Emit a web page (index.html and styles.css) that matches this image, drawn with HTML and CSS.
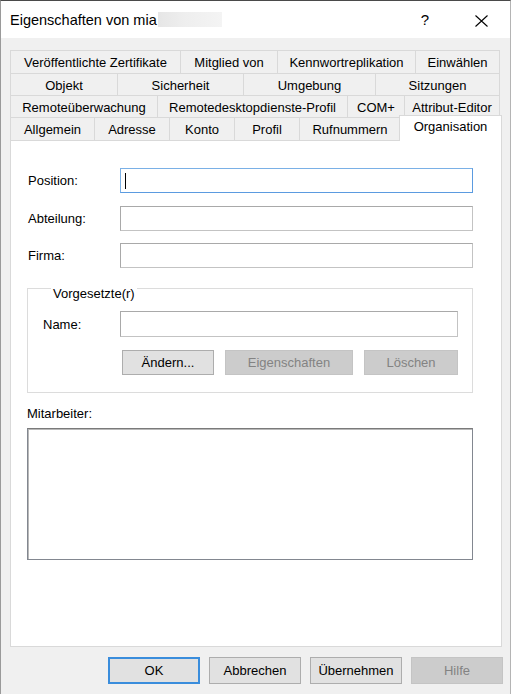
FILE: index.html
```html
<!DOCTYPE html>
<html lang="de">
<head>
<meta charset="utf-8">
<title>Eigenschaften von mia</title>
<link rel="stylesheet" href="styles.css">
</head>
<body>
<div class="window">
  <div class="titlebar">
    <span class="title">Eigenschaften von mia<span class="redact"></span></span>
    <span class="help">?</span>
    <span class="close"><svg width="13" height="12" viewBox="0 0 13 12"><path d="M0.5 0.5 L12.5 11.5 M12.5 0.5 L0.5 11.5" stroke="#000" stroke-width="1.1" fill="none"/></svg></span>
  </div>
  <div class="dialog">
    <div class="tabs">
      <div class="tabrow r1">
        <div class="tab">Veröffentlichte Zertifikate</div>
        <div class="tab">Mitglied von</div>
        <div class="tab">Kennwortreplikation</div>
        <div class="tab">Einwählen</div>
      </div>
      <div class="tabrow r2">
        <div class="tab">Objekt</div>
        <div class="tab">Sicherheit</div>
        <div class="tab">Umgebung</div>
        <div class="tab">Sitzungen</div>
      </div>
      <div class="tabrow r3">
        <div class="tab">Remoteüberwachung</div>
        <div class="tab">Remotedesktopdienste-Profil</div>
        <div class="tab">COM+</div>
        <div class="tab">Attribut-Editor</div>
      </div>
      <div class="tabrow r4">
        <div class="tab">Allgemein</div>
        <div class="tab">Adresse</div>
        <div class="tab">Konto</div>
        <div class="tab">Profil</div>
        <div class="tab">Rufnummern</div>
        <div class="tab active">Organisation</div>
      </div>
    </div>
    <div class="panel">
      <div class="form">
        <label class="lbl">Position:</label>
        <div class="field focus"><span class="caret"></span></div>
        <label class="lbl">Abteilung:</label>
        <div class="field"></div>
        <label class="lbl">Firma:</label>
        <div class="field"></div>
      </div>
      <div class="group">
        <div class="group-title">Vorgesetzte(r)</div>
        <div class="group-body">
          <label class="lbl">Name:</label>
          <div class="field name"></div>
          <div class="group-buttons">
            <button class="btn w92">Ändern...</button>
            <button class="btn w128" disabled>Eigenschaften</button>
            <button class="btn w94" disabled>Löschen</button>
          </div>
        </div>
      </div>
      <div class="list-label">Mitarbeiter:</div>
      <div class="listbox"></div>
    </div>
    <div class="footer">
      <button class="btn fbtn default">OK</button>
      <button class="btn fbtn">Abbrechen</button>
      <button class="btn fbtn">Übernehmen</button>
      <button class="btn fbtn" disabled>Hilfe</button>
    </div>
  </div>
</div>
</body>
</html>
```

FILE: styles.css
```css
* { box-sizing: border-box; }
html, body { margin: 0; padding: 0; }
body {
  font-family: "Liberation Sans", Arial, sans-serif;
  font-size: 13px;
  color: #000;
  background: #f0f0f0;
}
.window {
  width: 511px;
  height: 694px;
  background: #f0f0f0;
  border-top: 1px solid #4a4a4a;
  border-left: 1px solid #9a9a9a;
  border-right: 1px solid #b4b4b4;
  overflow: hidden;
}
.titlebar {
  height: 37px;
  background: #fff;
  display: flex;
  align-items: center;
  padding-left: 9px;
}
.title {
  flex: 1;
  font-size: 14.5px;
  display: flex;
  align-items: center;
}
.redact {
  display: inline-block;
  width: 64px;
  height: 15px;
  margin-left: 1px;
  background: linear-gradient(90deg, #e6e6e6 0%, #eeeeee 40%, #f4f4f4 100%);
}
.help {
  width: 20px;
  text-align: center;
  font-size: 15px;
  margin-right: 40px;
}
.close {
  display: flex;
  width: 13px;
  height: 12px;
  margin-right: 22px;
  margin-top: 2px;
}
.dialog {
  padding: 12px 7px 0 9px;
}
.tabs {
  width: 490px;
}
.tabrow {
  display: grid;
  height: 22px;
}
.tabrow.r1 { grid-template-columns: 170px 97px 138px 85px; height: 23px; }
.tabrow.r2 { grid-template-columns: 107px 126px 132px 125px; }
.tabrow.r3 { grid-template-columns: 147px 190px 57px 96px; }
.tabrow.r4 { grid-template-columns: 84px 75px 65px 65px 101px 100px; height: 23px; }
.tab {
  border-top: 1px solid #d9d9d9;
  border-left: 1px solid #d9d9d9;
  background: #f0f0f0;
  display: flex;
  align-items: center;
  justify-content: center;
  white-space: nowrap;
  padding-top: 1px;
}
.tab:last-child { border-right: 1px solid #d9d9d9; }
.tab.active {
  background: #fff;
  margin: -2px -2px -1px -1px;
  border-right: 1px solid #d9d9d9;
  position: relative;
  z-index: 1;
  padding-top: 0;
  padding-bottom: 4px;
}
.panel {
  width: 492px;
  height: 507px;
  background: #fff;
  border: 1px solid #d9d9d9;
  padding: 27px 28px 0 16px;
}
.form {
  display: grid;
  grid-template-columns: 93px 1fr;
  grid-auto-rows: 25px;
  row-gap: 12.5px;
  align-items: center;
}
.lbl { padding-left: 1px; }
.field {
  height: 25px;
  background: #fff;
  border: 1px solid #a9a9a9;
  border-right-color: #c3c3c3;
  border-bottom-color: #c3c3c3;
  display: flex;
  align-items: center;
}
.field.focus {
  border: 1px solid #7ab0e6;
  border-bottom-color: #5b9be0;
  border-right-color: #5b9be0;
}
.caret {
  display: block;
  width: 1px;
  height: 16px;
  margin-left: 4px;
  background: #000;
}
.group {
  margin-top: 20px;
  border: 1px solid #dcdcdc;
  padding: 0 14px 17px 15px;
}
.group-title {
  display: table;
  margin: -3px 0 0 8px;
  padding: 0 2px;
  background: #fff;
  line-height: 15px;
}
.group-body {
  margin-top: 10px;
  display: grid;
  grid-template-columns: 77px 1fr;
  row-gap: 13px;
  align-items: center;
}
.group-body .lbl { padding-left: 0; }
.field.name { height: 26px; }
.group-buttons {
  grid-column: 2;
  display: flex;
  justify-content: space-between;
  padding-left: 2px;
}
.btn {
  font-family: "Liberation Sans", Arial, sans-serif;
  font-size: 13px;
  color: #000;
  height: 25px;
  background: #e1e1e1;
  border: 1px solid #adadad;
  padding: 0;
  margin: 0;
  border-radius: 0;
}
.btn:disabled {
  background: #cccccc;
  border-color: #c4c4c4;
  color: #838383;
}
.w92 { width: 92px; }
.w128 { width: 128px; }
.w94 { width: 94px; }
.list-label {
  margin-top: 13px;
  line-height: 15px;
}
.listbox {
  margin-top: 7px;
  height: 132px;
  background: #fff;
  border: 1px solid #828790;
  border-top-color: #7a7a7a;
  box-shadow: inset 1px 1px 0 #b8b8b8;
}
.footer {
  margin-top: 10px;
  display: flex;
  justify-content: flex-end;
  gap: 9px;
}
.fbtn {
  width: 92px;
  height: 27px;
}
.fbtn.default {
  border: 2px solid #3a8ddc;
}
```
